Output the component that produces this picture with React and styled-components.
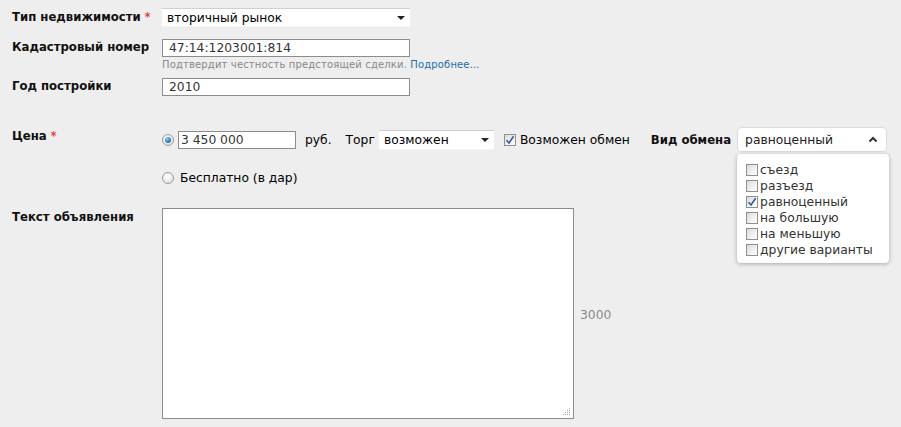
import React from "react";
import styled, { createGlobalStyle } from "styled-components";

const Global = createGlobalStyle`
  html, body { margin: 0; padding: 0; background: #eeeeee; }
  body { font-family: "DejaVu Sans", Verdana, sans-serif; font-size: 12px; color: #000; }
`;

const Form = styled.div`
  padding: 8px 0 0 12px;
  white-space: nowrap;
`;

const Row = styled.div`
  display: flex;
  align-items: ${p => p.$align || "flex-start"};
  margin-top: ${p => p.$top || 0}px;
  height: ${p => (p.$h ? `${p.$h}px` : "auto")};
  position: relative;
`;

const Label = styled.div`
  width: 150px;
  flex: none;
  font-family: "DejaVu Sans Condensed", "DejaVu Sans", sans-serif;
  font-weight: bold;
  font-size: 13px;
  color: #111;
  padding-top: ${p => p.$pt || 0}px;
  align-self: flex-start;
`;

const Star = styled.span`
  color: #e0403a;
  margin-left: 4px;
  font-size: 12px;
`;

const Field = styled.div`
  display: flex;
  flex-direction: column;
`;

const Select = styled.div`
  width: ${p => p.$w}px;
  height: ${p => p.$h || 20}px;
  box-sizing: border-box;
  background: #fff;
  border-top: 1px solid #d0d0d0;
  border-bottom: 1px solid #f4f4f4;
  display: flex;
  align-items: center;
  justify-content: space-between;
  padding: 0 5px 0 5px;
  font-size: 12.3px;
  color: #000;
  flex: none;
`;

const Triangle = styled.span`
  width: 0;
  height: 0;
  border-left: 4px solid transparent;
  border-right: 4px solid transparent;
  border-top: 4px solid #222;
`;

const TextInput = styled.div`
  width: ${p => p.$w}px;
  height: ${p => p.$h || 18}px;
  box-sizing: border-box;
  border: 1px solid #8c8c8c;
  background: #fff;
  padding: 0 ${p => p.$pl ?? 6}px;
  display: flex;
  align-items: center;
  font-size: 12.3px;
  color: #333;
  flex: none;
`;

const Hint = styled.div`
  margin-top: 2px;
  font-size: 10px;
  color: #888;
  letter-spacing: 0.15px;
  a { color: #1f6fa6; text-decoration: none; }
`;

const Radio = styled.span`
  width: 12px;
  height: 12px;
  box-sizing: border-box;
  border-radius: 50%;
  border: 1px solid #9a9a9a;
  background: radial-gradient(circle at 40% 35%, #ffffff, #dcdcdc);
  display: inline-flex;
  align-items: center;
  justify-content: center;
  flex: none;
  &::after {
    content: "";
    display: ${p => (p.$on ? "block" : "none")};
    width: 6px;
    height: 6px;
    border-radius: 50%;
    background: radial-gradient(circle at 35% 30%, #8fd0ff, #1f6aa8 70%, #0d3f70);
  }
`;

const Check = styled.span`
  width: 12px;
  height: 12px;
  box-sizing: border-box;
  border: 1px solid #8f8f8f;
  background: linear-gradient(135deg, #dcdcdc, #ffffff);
  display: inline-flex;
  align-items: center;
  justify-content: center;
  flex: none;
`;

const Inline = styled.div`
  display: flex;
  flex: none;
  align-items: center;
  gap: ${p => p.$gap || 0}px;
  margin-left: ${p => p.$ml || 0}px;
  font-size: 12.3px;
`;

const BoldText = styled.span`
  font-family: "DejaVu Sans Condensed", "DejaVu Sans", sans-serif;
  font-weight: bold;
  font-size: 13px;
  color: #111;
`;

const ExchangeWrap = styled.div`
  position: relative;
  flex: none;
  margin-left: 6px;
`;

const RoundSelect = styled.div`
  width: 150px;
  height: 25px;
  box-sizing: border-box;
  background: #fff;
  border: 1px solid #dcdcdc;
  border-radius: 4px;
  display: flex;
  align-items: center;
  justify-content: space-between;
  padding: 0 8px 0 7px;
  font-size: 12.3px;
  color: #222;
`;

const Menu = styled.div`
  position: absolute;
  top: 27px;
  left: 0;
  width: 152px;
  box-sizing: border-box;
  background: #fff;
  border-radius: 4px;
  box-shadow: 0 1px 4px rgba(0, 0, 0, 0.3);
  padding: 8px 0 5px 9px;
  z-index: 5;
`;

const MenuItem = styled.div`
  display: flex;
  align-items: center;
  gap: 2px;
  height: 16px;
  font-size: 12.3px;
  color: #333;
`;

const TextArea = styled.div`
  width: 412px;
  height: 211px;
  box-sizing: border-box;
  border: 1px solid #8c8c8c;
  background: #fff;
  position: relative;
  flex: none;
`;

const Grip = styled.svg`
  position: absolute;
  right: 2px;
  bottom: 2px;
`;

const Counter = styled.div`
  align-self: center;
  margin-left: 6px;
  color: #888;
  font-size: 12.3px;
  margin-top: 2px;
`;

const Tick = () => (
  <svg width="10" height="10" viewBox="0 0 10 10">
    <path d="M1.5 5.2 L4 8 L8.6 1.2" fill="none" stroke="#3d5aa0" strokeWidth="1.6" />
  </svg>
);

const CheckBox = ({ on }) => <Check>{on ? <Tick /> : null}</Check>;

const Chevron = () => (
  <svg width="10" height="7" viewBox="0 0 10 7">
    <path d="M1.5 5.5 L5 2 L8.5 5.5" fill="none" stroke="#333" strokeWidth="2" />
  </svg>
);

const options = [
  ["съезд", false],
  ["разъезд", false],
  ["равноценный", true],
  ["на большую", false],
  ["на меньшую", false],
  ["другие варианты", false],
];

export default function App() {
  return (
    <>
      <Global />
      <Form>
        <Row>
          <Label $pt={1}>Тип недвижимости<Star>*</Star></Label>
          <Select $w={248} $h={19}>
            вторичный рынок
            <Triangle />
          </Select>
        </Row>

        <Row $top={12}>
          <Label $pt={0}>Кадастровый номер</Label>
          <Field>
            <TextInput $w={248}>47:14:1203001:814</TextInput>
            <Hint>
              Подтвердит честность предстоящей сделки. <a href="#">Подробнее...</a>
            </Hint>
          </Field>
        </Row>

        <Row $top={8}>
          <Label $pt={0}>Год постройки</Label>
          <TextInput $w={248}>2010</TextInput>
        </Row>

        <Row $top={31} $align="center" $h={25}>
          <Label $pt={1}>Цена<Star>*</Star></Label>
          <Inline $gap={4}>
            <Radio $on />
            <TextInput $w={118} $h={18} $pl={2}>3 450 000</TextInput>
          </Inline>
          <Inline $ml={9}>руб.</Inline>
          <Inline $ml={14} $gap={4}>
            Торг
            <Select $w={115} $h={20}>
              возможен
              <Triangle />
            </Select>
          </Inline>
          <Inline $ml={10} $gap={4}>
            <CheckBox on />
            Возможен обмен
          </Inline>
          <Inline $ml={21}>
            <BoldText>Вид обмена</BoldText>
          </Inline>
          <ExchangeWrap>
            <RoundSelect>
              равноценный
              <Chevron />
            </RoundSelect>
            <Menu>
              {options.map(([t, on]) => (
                <MenuItem key={t}>
                  <CheckBox on={on} />
                  {t}
                </MenuItem>
              ))}
            </Menu>
          </ExchangeWrap>
        </Row>

        <Row $top={19}>
          <Label />
          <Inline $gap={6}>
            <Radio />
            Бесплатно (в дар)
          </Inline>
        </Row>

        <Row $top={23}>
          <Label $pt={1}>Текст объявления</Label>
          <TextArea>
            <Grip width="8" height="8" viewBox="0 0 8 8">
              <g fill="#aaa">
                <rect x="6" y="0" width="1" height="1" />
                <rect x="4" y="2" width="1" height="1" />
                <rect x="6" y="2" width="1" height="1" />
                <rect x="2" y="4" width="1" height="1" />
                <rect x="4" y="4" width="1" height="1" />
                <rect x="6" y="4" width="1" height="1" />
                <rect x="0" y="6" width="1" height="1" />
                <rect x="2" y="6" width="1" height="1" />
                <rect x="4" y="6" width="1" height="1" />
                <rect x="6" y="6" width="1" height="1" />
              </g>
            </Grip>
          </TextArea>
          <Counter>3000</Counter>
        </Row>
      </Form>
    </>
  );
}
